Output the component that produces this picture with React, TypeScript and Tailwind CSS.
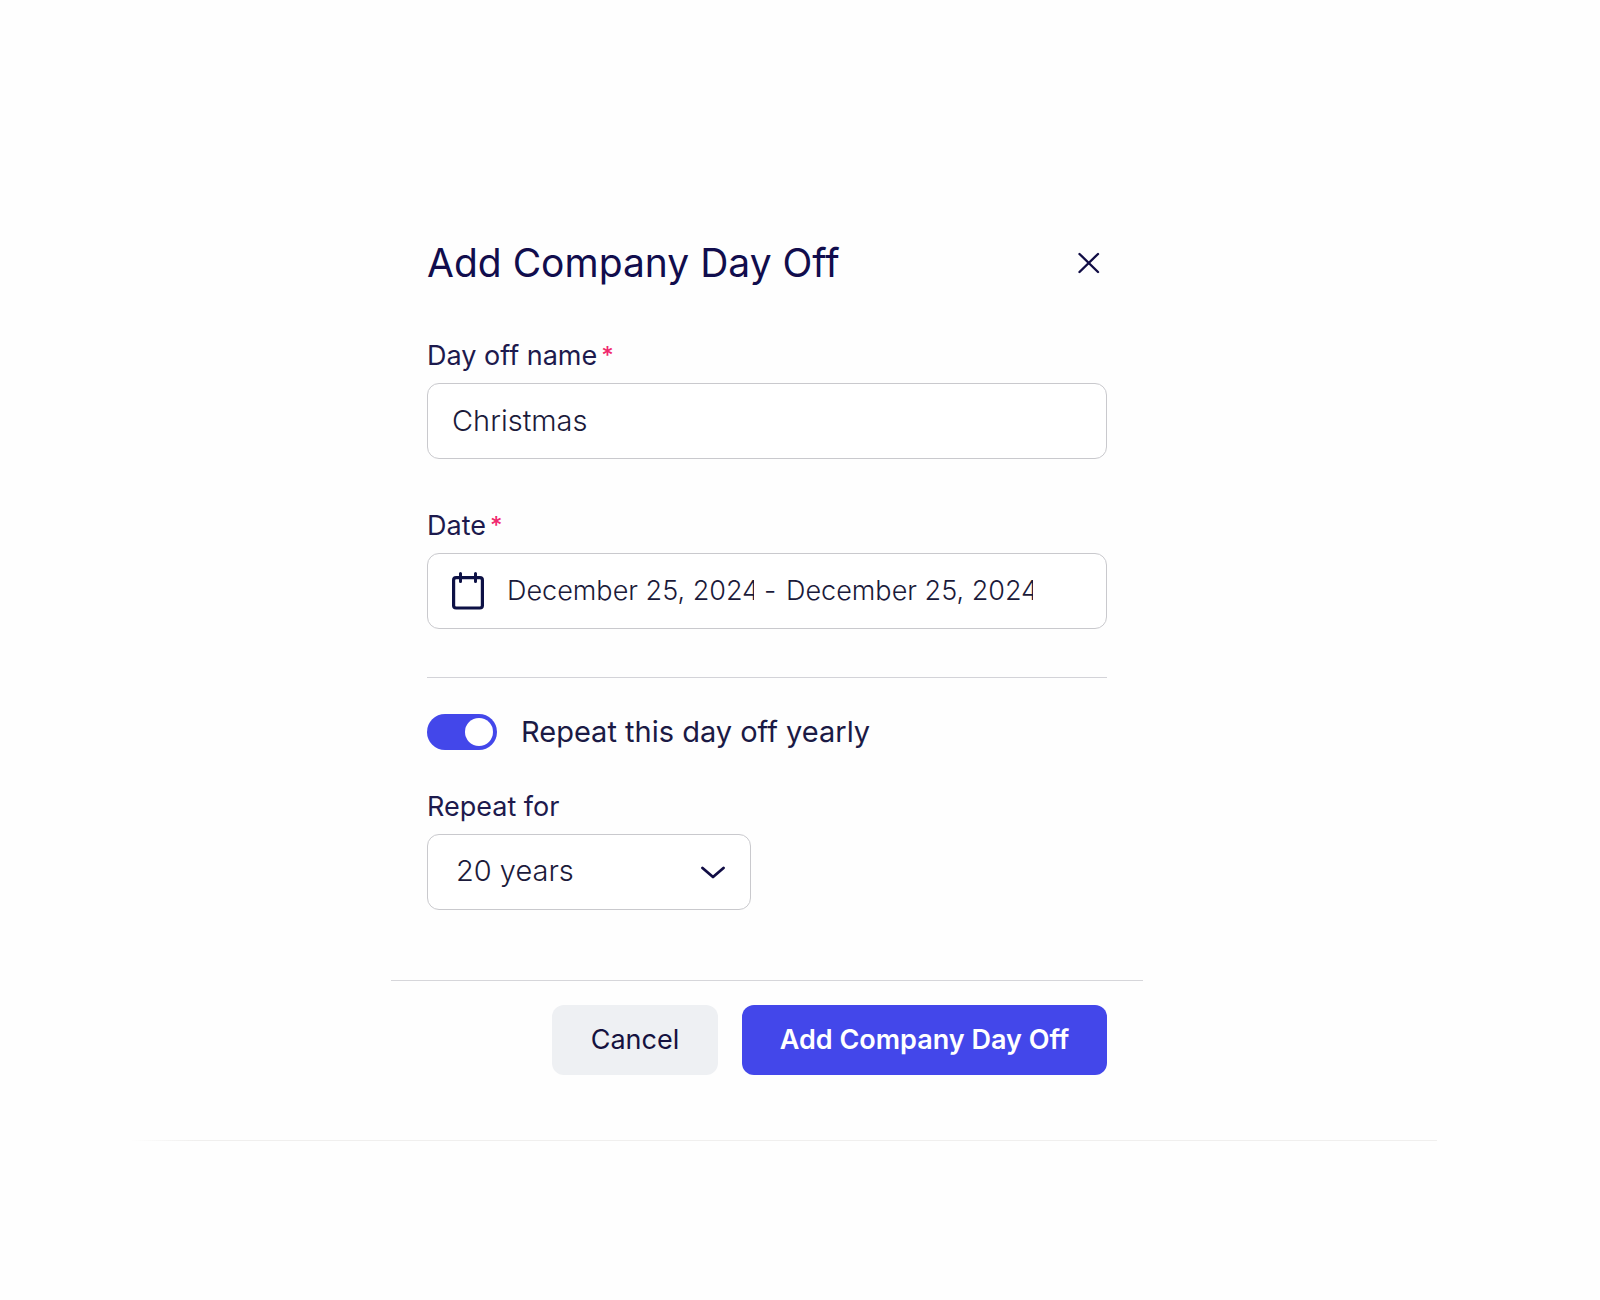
import { useState } from 'react';
import type { ReactNode } from 'react';

interface FieldLabelProps {
  htmlFor: string;
  required?: boolean;
  children: ReactNode;
}

function FieldLabel({ htmlFor, required = false, children }: FieldLabelProps) {
  return (
    <label htmlFor={htmlFor} className="flex gap-1 text-[27px] leading-8 text-[#1d1a4d]">
      {children}
      {required && <span className="text-2xl leading-8 font-medium text-[#f0286e]">*</span>}
    </label>
  );
}

function CloseIcon() {
  return (
    <svg width="24" height="24" viewBox="0 0 24 24" fill="none" stroke="#110d45" strokeWidth="2.4" strokeLinecap="round">
      <path d="M2.5 3l18.5 18M21 3L2.5 21" />
    </svg>
  );
}

function CalendarIcon() {
  return (
    <svg width="32" height="38" viewBox="0 0 32 38" fill="none" stroke="#0d1145" className="shrink-0">
      <rect x="1.6" y="5.6" width="28.8" height="30.4" rx="2.5" strokeWidth="3.2" />
      <path d="M8.5 1.5v8M23.5 1.5v8" strokeWidth="3" strokeLinecap="round" />
    </svg>
  );
}

function ChevronIcon() {
  return (
    <svg
      width="24"
      height="14"
      viewBox="0 0 24 14"
      fill="none"
      stroke="#110d45"
      strokeWidth="2.8"
      strokeLinecap="round"
      strokeLinejoin="round"
      className="pointer-events-none absolute right-[26px] top-8"
    >
      <path d="M1.5 2l10.5 9L22.5 2" />
    </svg>
  );
}

export default function App() {
  const [name, setName] = useState('Christmas');
  const [start, setStart] = useState('December 25, 2024');
  const [end, setEnd] = useState('December 25, 2024');
  const [repeat, setRepeat] = useState(true);
  const [years, setYears] = useState('20');

  return (
    <main className="min-h-screen bg-[#fefefe] pt-[239px] font-['Inter',sans-serif]">
      <div className="pr-[66px]">
        <form className="mx-auto max-w-[752px]" onSubmit={(e) => e.preventDefault()}>
          <div className="px-9">
            <header className="flex items-center justify-between pr-[6px]">
              <h1 className="text-[39px] leading-[48px] text-[#110d4d]">Add Company Day Off</h1>
              <button type="button" aria-label="Close">
                <CloseIcon />
              </button>
            </header>

            <div className="mt-[53px]">
              <FieldLabel htmlFor="name" required>Day off name</FieldLabel>
              <input
                id="name"
                value={name}
                onChange={(e) => setName(e.target.value)}
                className="mt-[11px] h-[76px] w-full rounded-xl border border-[#c9c9cd] bg-white px-6 pb-0.5 text-[29px] font-light text-[#1b1a3a] outline-none"
              />
            </div>

            <div className="mt-[51px]">
              <FieldLabel htmlFor="start" required>Date</FieldLabel>
              <div className="mt-[11px] flex h-[76px] items-center rounded-xl border border-[#c9c9cd] bg-white px-6 text-[27px] font-light text-[#1b1a3a]">
                <CalendarIcon />
                <input
                  id="start"
                  value={start}
                  onChange={(e) => setStart(e.target.value)}
                  className="ml-[23px] w-[247px] outline-none"
                />
                <span className="w-8 text-center">-</span>
                <input
                  aria-label="End date"
                  value={end}
                  onChange={(e) => setEnd(e.target.value)}
                  className="w-[247px] outline-none"
                />
              </div>
            </div>

            <hr className="mt-12 border-[#d3d3d8]" />

            <label className="mt-9 flex items-center gap-6 text-[29px] leading-9 text-[#1b1a45]">
              <input
                type="checkbox"
                role="switch"
                checked={repeat}
                onChange={(e) => setRepeat(e.target.checked)}
                className="peer sr-only"
              />
              <span className="flex h-9 w-[70px] items-center justify-start rounded-full bg-[#c9c9cd] p-1 peer-checked:justify-end peer-checked:bg-[#4347ea]">
                <span className="size-7 rounded-full bg-white" />
              </span>
              Repeat this day off yearly
            </label>

            <div className="mt-[41px]">
              <FieldLabel htmlFor="years">Repeat for</FieldLabel>
              <div className="relative mt-[11px] w-[324px]">
                <select
                  id="years"
                  value={years}
                  onChange={(e) => setYears(e.target.value)}
                  className="h-[76px] w-full appearance-none rounded-xl border border-[#c9c9cd] bg-white px-7 pb-0.5 text-[29px] font-light text-[#1b1a3a] outline-none"
                >
                  <option value="5">5 years</option>
                  <option value="10">10 years</option>
                  <option value="20">20 years</option>
                </select>
                <ChevronIcon />
              </div>
            </div>
          </div>

          <footer className="mt-[70px] flex justify-end gap-6 border-t border-[#d6d6da] pr-9 pt-6 text-[27px]">
            <button type="button" className="h-[70px] w-[166px] rounded-xl bg-[#eef0f3] text-[#15123f]">
              Cancel
            </button>
            <button type="submit" className="h-[70px] w-[365px] rounded-xl bg-[#4347ea] font-semibold text-white">
              Add Company Day Off
            </button>
          </footer>
        </form>
      </div>

      <div className="mt-[65px] ml-[130px] mr-[163px] h-px bg-linear-to-r from-transparent via-[#f0efee] via-5% to-[#f0efee]" />
    </main>
  );
}
